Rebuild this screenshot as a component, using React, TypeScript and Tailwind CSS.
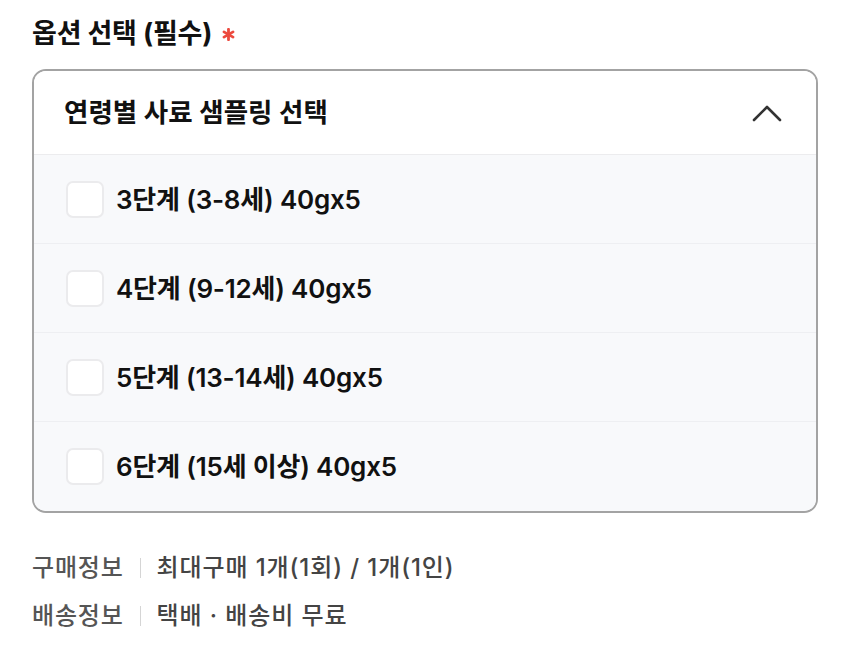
import { useState } from "react";

const options = [
  "3단계 (3-8세) 40gx5",
  "4단계 (9-12세) 40gx5",
  "5단계 (13-14세) 40gx5",
  "6단계 (15세 이상) 40gx5",
];

export default function App() {
  const [checked, setChecked] = useState<string[]>([]);

  const toggle = (label: string) => {
    setChecked(prev => (prev.includes(label) ? prev.filter(l => l !== label) : [...prev, label]));
  };

  return (
    <div
      className="w-[850px] h-[650px] bg-white px-8 pt-[18px] text-[#111]"
      style={{ fontFamily: 'Inter, "Noto Sans CJK KR", sans-serif' }}
    >
      {/* Title */}
      <div className="flex items-center h-[32px]">
        <h2 className="text-[27px] font-bold tracking-[-0.2px]">옵션 선택 (필수)</h2>
        <svg viewBox="0 0 12 12" className="w-[13px] h-[13px] ml-[10px] mt-[1px]">
          <g stroke="#ec4a3e" strokeWidth="2.6" strokeLinecap="round">
            <line x1="6" y1="1.2" x2="6" y2="10.8" />
            <line x1="1.8" y1="3.6" x2="10.2" y2="8.4" />
            <line x1="1.8" y1="8.4" x2="10.2" y2="3.6" />
          </g>
        </svg>
      </div>

      {/* Select box */}
      <div className="mt-[19px] border-2 border-[#a3a3a3] rounded-[14px] overflow-hidden">
        <div className="flex items-center justify-between h-[84px] pl-[30px] pr-[34px] bg-white border-b border-[#ececee]">
          <span className="text-[26.5px] font-semibold">연령별 사료 샘플링 선택</span>
          <svg viewBox="0 0 30 18" className="w-[30px] h-[18px]">
            <path d="M2 16 L15 3 L28 16" fill="none" stroke="#333" strokeWidth="2.6" strokeLinecap="round" strokeLinejoin="round" />
          </svg>
        </div>
        <div className="bg-[#f8f9fb]">
          {options.map((label, i) => (
            <label
              key={label}
              className={`flex items-center h-[89px] pl-[32px] cursor-pointer ${i < options.length - 1 ? "border-b border-[#eeeff2]" : ""}`}
            >
              <input
                type="checkbox"
                className="sr-only"
                checked={checked.includes(label)}
                onChange={() => toggle(label)}
              />
              <span
                className={`w-[38px] h-[37px] rounded-[7px] border-2 ${checked.includes(label) ? "bg-[#111] border-[#111]" : "bg-white border-[#ebebed]"}`}
              />
              <span className="ml-[12px] text-[26px] font-semibold tracking-[-0.2px]">{label}</span>
            </label>
          ))}
        </div>
      </div>

      {/* Info */}
      <div className="mt-[38px] flex flex-col gap-[14px] text-[24px]">
        <div className="flex items-center h-[34px]">
          <span className="text-[#555] font-medium tracking-[0.8px]">구매정보</span>
          <span className="mx-[16px] w-px h-[20px] bg-[#d5d5d5]" />
          <span className="text-[#444] font-medium tracking-[0.9px]">최대구매 1개(1회) / 1개(1인)</span>
        </div>
        <div className="flex items-center h-[34px]">
          <span className="text-[#555] font-medium tracking-[0.8px]">배송정보</span>
          <span className="mx-[16px] w-px h-[20px] bg-[#d5d5d5]" />
          <span className="text-[#444] font-medium tracking-[0.9px]">택배 · 배송비 무료</span>
        </div>
      </div>
    </div>
  );
}
